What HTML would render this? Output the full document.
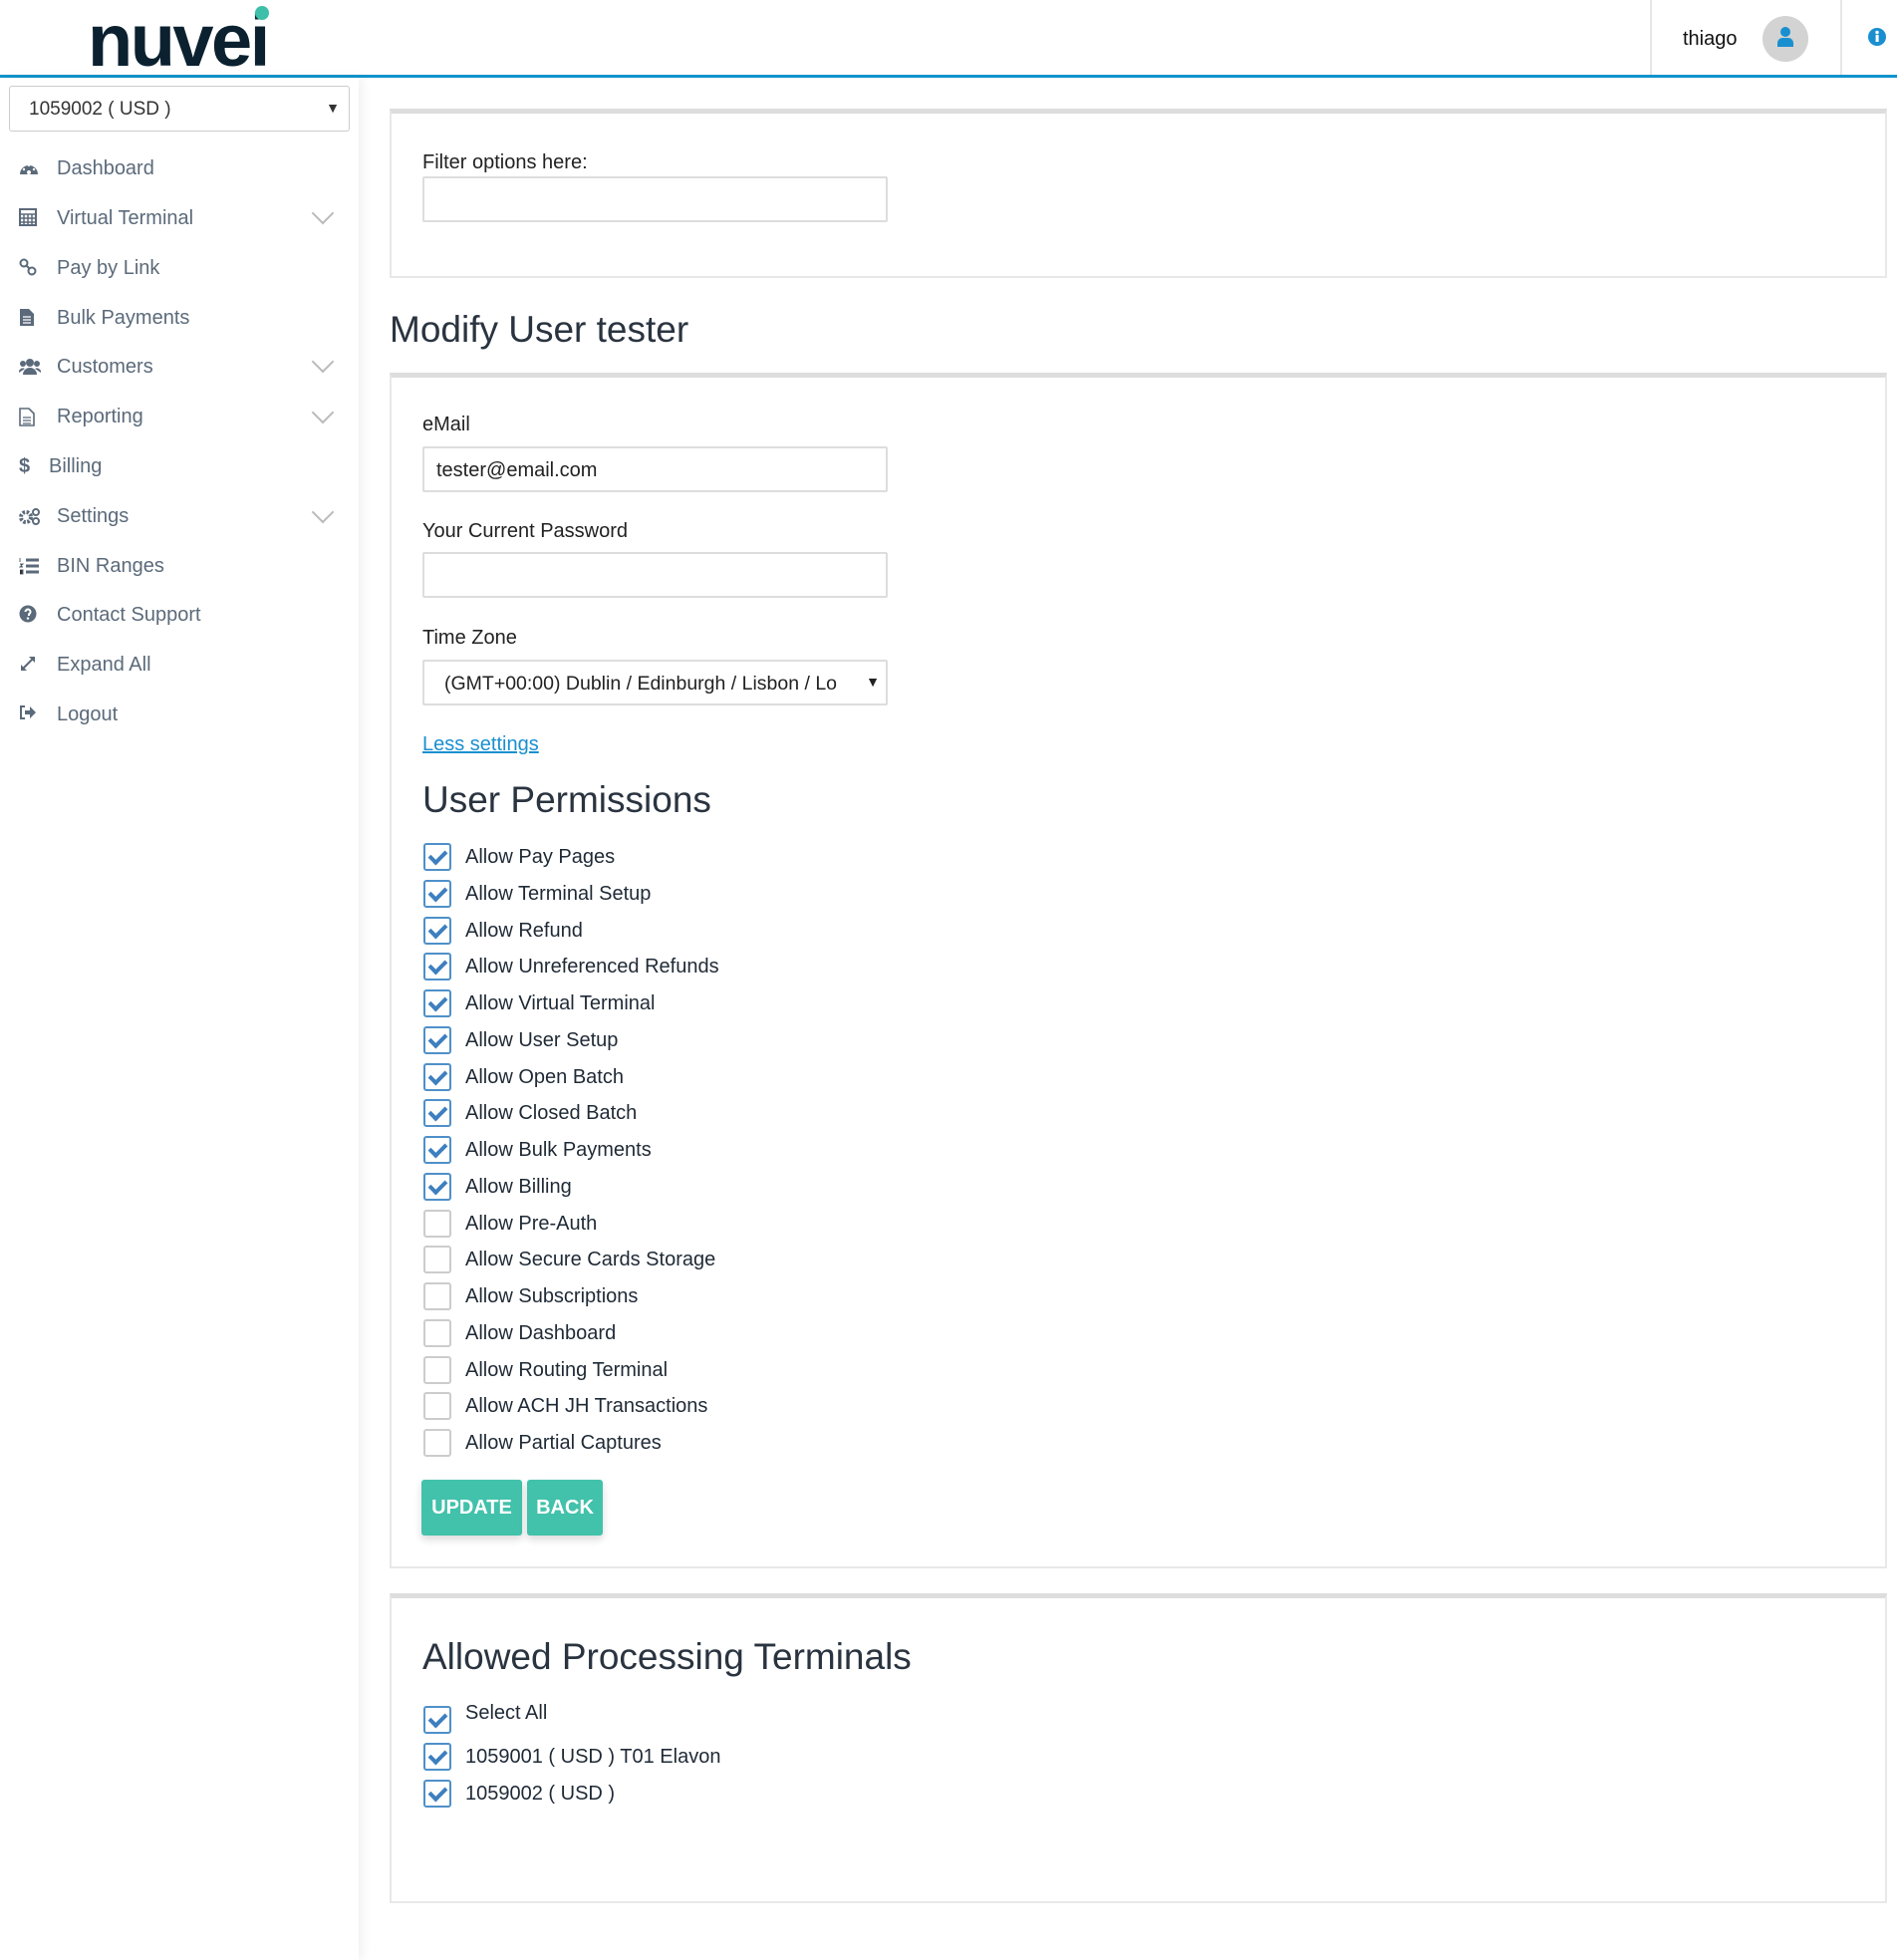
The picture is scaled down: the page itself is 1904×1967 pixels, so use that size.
<!DOCTYPE html>
<html><head><meta charset="utf-8"><style>
*{box-sizing:border-box;margin:0;padding:0}
body{width:1904px;height:1967px;position:relative;background:#fff;font-family:"Liberation Sans",Arial,sans-serif;color:#1f2a36;overflow:hidden}
.abs{position:absolute}
.hdr{left:0;top:0;width:1904px;height:78px;background:#fff;border-bottom:3px solid #0e94cc}
.logo{left:88px;top:4px;font:bold 74px/74px "Liberation Sans",sans-serif;color:#0b2130;letter-spacing:-2.5px}
.dot{left:256px;top:6px;width:14px;height:14px;border-radius:50%;background:#3dbfa9}
.vsep{top:0;width:2px;height:75px;background:#e6e6e6}
.side{left:0;top:78px;width:360px;height:1889px;background:#fff;box-shadow:4px 0 10px rgba(0,0,0,.06)}
.sel{left:9px;top:86px;width:342px;height:46px;border:1px solid #ccc;border-radius:3px;font-size:19px;padding:12px 19px;color:#333}
.nav{left:57px;font-size:20px;color:#5b6a7a;height:30px;line-height:30px}
.ic{position:absolute;left:19px}
.chev{left:316px;width:16px;height:16px;border-right:2px solid #bbb;border-bottom:2px solid #bbb;transform:rotate(45deg)}
.panel{left:391px;width:1503px;border:2px solid #e8e8e8;border-top:5px solid #ddd;background:#fff}
.lbl{left:424px;font-size:20px;color:#222}
.inp{left:424px;width:467px;height:46px;border:2px solid #ddd;border-radius:2px;font-size:20px;padding:11px 12px;color:#222}
h1,h2{position:absolute;font-weight:normal;color:#2a3440;font-family:"Liberation Sans",sans-serif}
.cb{left:425px;width:28px;height:28px;border:2px solid #ccc;border-radius:3px;background:#fff}
.cb.on{border-color:#4f90c9}
.cb.on:after{content:"";position:absolute;left:7px;top:2px;width:7px;height:13px;border-right:4px solid #3d7fbf;border-bottom:4px solid #3d7fbf;transform:rotate(45deg)}
.ct{left:467px;font-size:20px;color:#1f2a36}
.btn{top:1485px;height:56px;background:#42c1ab;color:#fff;font-weight:bold;font-size:20px;line-height:56px;text-align:center;border-radius:3px;box-shadow:0 4px 8px rgba(0,0,0,.15)}
</style></head><body>
<div class="abs hdr"></div>
<div class="abs logo">nuvei</div>
<div class="abs dot"></div>
<div class="abs vsep" style="left:1656px"></div>
<div class="abs vsep" style="left:1847px"></div>
<div class="abs" style="left:1689px;top:28px;font-size:20px;color:#111">thiago</div>
<div class="abs" style="left:1769px;top:16px;width:46px;height:46px;border-radius:50%;background:#d3d3d3"></div>
<svg class="abs" style="left:1781px;top:26px" width="22" height="22" viewBox="0 0 22 22"><circle cx="11" cy="6" r="5" fill="#1a8fd0"/><path d="M3 21v-4a5 5 0 0 1 5-5h6a5 5 0 0 1 5 5v4z" fill="#1a8fd0"/></svg>
<svg class="abs" style="left:1875px;top:28px" width="18" height="18" viewBox="0 0 18 18"><circle cx="9" cy="9" r="9" fill="#1a8fd0"/><rect x="7.6" y="7" width="3" height="7" fill="#fff"/><circle cx="9" cy="4.5" r="1.7" fill="#fff"/></svg>

<div class="abs side"></div>
<div class="abs sel">1059002 ( USD )<span style="position:absolute;right:9px;top:13px;font-size:14px">▼</span></div>

<svg class="ic" style="top:160px" width="20" height="18" viewBox="0 0 20 18"><path d="M1 15a9 9 0 0 1 18 0z" fill="#5b6a7a"/><circle cx="10" cy="13" r="2" fill="#fff"/><circle cx="5" cy="10" r="1.2" fill="#fff"/><circle cx="15" cy="10" r="1.2" fill="#fff"/><circle cx="10" cy="6" r="1.2" fill="#fff"/></svg>
<div class="abs nav" style="top:154px">Dashboard</div>
<svg class="ic" style="top:209px" width="18" height="18" viewBox="0 0 18 18"><rect x="1" y="1" width="16" height="16" fill="none" stroke="#5b6a7a" stroke-width="2"/><path d="M1 6h16M1 10h16M1 14h16M5 6v11M9 6v11M13 6v11" stroke="#5b6a7a" stroke-width="1.5"/></svg>
<div class="abs nav" style="top:204px">Virtual Terminal</div>
<div class="abs chev" style="top:206px"></div>
<svg class="ic" style="top:259px" width="18" height="18" viewBox="0 0 18 18"><circle cx="5" cy="5" r="3.5" fill="none" stroke="#5b6a7a" stroke-width="2"/><circle cx="13" cy="13" r="3.5" fill="none" stroke="#5b6a7a" stroke-width="2"/><path d="M7 7l4 4" stroke="#5b6a7a" stroke-width="2"/></svg>
<div class="abs nav" style="top:254px">Pay by Link</div>
<svg class="ic" style="top:309px" width="16" height="19" viewBox="0 0 16 19"><path d="M1 1h9l5 5v12H1z" fill="#5b6a7a"/><path d="M4 9h8M4 12h8M4 15h8" stroke="#fff" stroke-width="1.3"/></svg>
<div class="abs nav" style="top:304px">Bulk Payments</div>
<svg class="ic" style="top:359px" width="22" height="17" viewBox="0 0 22 17"><circle cx="11" cy="5" r="4" fill="#5b6a7a"/><circle cx="4" cy="6" r="3" fill="#5b6a7a"/><circle cx="18" cy="6" r="3" fill="#5b6a7a"/><path d="M4 17a7 7 0 0 1 14 0zM0 15a4 4 0 0 1 6-4M22 15a4 4 0 0 0-6-4" fill="#5b6a7a"/></svg>
<div class="abs nav" style="top:353px">Customers</div>
<div class="abs chev" style="top:355px"></div>
<svg class="ic" style="top:409px" width="16" height="19" viewBox="0 0 16 19"><path d="M1 1h9l5 5v12H1z" fill="none" stroke="#5b6a7a" stroke-width="1.6"/><path d="M4 10h8M4 13h8M4 16h8" stroke="#5b6a7a" stroke-width="1.3"/></svg>
<div class="abs nav" style="top:403px">Reporting</div>
<div class="abs chev" style="top:406px"></div>
<div class="abs" style="left:19px;top:453px;font-size:20px;font-weight:bold;color:#5b6a7a;line-height:30px">$</div>
<div class="abs nav" style="top:453px;left:49px">Billing</div>
<svg class="ic" style="top:509px" width="22" height="18" viewBox="0 0 22 18"><circle cx="7" cy="10" r="5" fill="none" stroke="#5b6a7a" stroke-width="4" stroke-dasharray="2.5 1.5"/><circle cx="17" cy="5" r="3" fill="none" stroke="#5b6a7a" stroke-width="2"/><circle cx="17" cy="14" r="3" fill="none" stroke="#5b6a7a" stroke-width="2"/></svg>
<div class="abs nav" style="top:503px">Settings</div>
<div class="abs chev" style="top:506px"></div>
<svg class="ic" style="top:559px" width="20" height="18" viewBox="0 0 20 18"><path d="M7 3h13M7 9h13M7 15h13" stroke="#5b6a7a" stroke-width="3"/><path d="M1 1v4M1 7h3l-3 3h3M1 13h3v4H1M1 15h3" stroke="#5b6a7a" stroke-width="1"/></svg>
<div class="abs nav" style="top:553px">BIN Ranges</div>
<svg class="ic" style="top:607px" width="18" height="18" viewBox="0 0 18 18"><circle cx="9" cy="9" r="8.5" fill="#5b6a7a"/><path d="M6.5 7a2.5 2.5 0 1 1 3.5 2.3V11" fill="none" stroke="#fff" stroke-width="2"/><circle cx="9" cy="13.6" r="1.2" fill="#fff"/></svg>
<div class="abs nav" style="top:602px">Contact Support</div>
<svg class="ic" style="top:657px" width="18" height="18" viewBox="0 0 18 18"><path d="M3 15L15 3" stroke="#5b6a7a" stroke-width="2"/><path d="M10 2h6v6zM2 10v6h6z" fill="#5b6a7a"/></svg>
<div class="abs nav" style="top:652px">Expand All</div>
<svg class="ic" style="top:707px" width="18" height="16" viewBox="0 0 18 16"><path d="M6 2H2v12h4" fill="none" stroke="#5b6a7a" stroke-width="2"/><path d="M6 6h5V2l6 6-6 6v-4H6z" fill="#5b6a7a"/></svg>
<div class="abs nav" style="top:702px">Logout</div>

<div class="abs panel" style="top:109px;height:170px"></div>
<div class="abs lbl" style="top:152px">Filter options here:</div>
<div class="abs inp" style="top:177px"></div>

<h1 style="left:391px;top:310px;font-size:37px">Modify User tester</h1>
<div class="abs panel" style="top:374px;height:1200px"></div>
<div class="abs lbl" style="top:415px">eMail</div>
<div class="abs inp" style="top:448px">tester@email.com</div>
<div class="abs lbl" style="top:522px">Your Current Password</div>
<div class="abs inp" style="top:554px"></div>
<div class="abs lbl" style="top:629px">Time Zone</div>
<div class="abs inp" style="top:662px;padding-left:20px;white-space:nowrap;overflow:hidden;font-size:19.5px">(GMT+00:00) Dublin / Edinburgh / Lisbon / Lo<span style="position:absolute;right:6px;top:12px;font-size:14px;background:#fff">▼</span></div>
<div class="abs" style="left:424px;top:736px;font-size:20px;color:#1a8fd0;text-decoration:underline">Less settings</div>
<h2 style="left:424px;top:782px;font-size:37px">User Permissions</h2>

<div class="abs cb on" style="top:846px"></div><div class="abs ct" style="top:849px">Allow Pay Pages</div>
<div class="abs cb on" style="top:883px"></div><div class="abs ct" style="top:886px">Allow Terminal Setup</div>
<div class="abs cb on" style="top:920px"></div><div class="abs ct" style="top:923px">Allow Refund</div>
<div class="abs cb on" style="top:956px"></div><div class="abs ct" style="top:959px">Allow Unreferenced Refunds</div>
<div class="abs cb on" style="top:993px"></div><div class="abs ct" style="top:996px">Allow Virtual Terminal</div>
<div class="abs cb on" style="top:1030px"></div><div class="abs ct" style="top:1033px">Allow User Setup</div>
<div class="abs cb on" style="top:1067px"></div><div class="abs ct" style="top:1070px">Allow Open Batch</div>
<div class="abs cb on" style="top:1103px"></div><div class="abs ct" style="top:1106px">Allow Closed Batch</div>
<div class="abs cb on" style="top:1140px"></div><div class="abs ct" style="top:1143px">Allow Bulk Payments</div>
<div class="abs cb on" style="top:1177px"></div><div class="abs ct" style="top:1180px">Allow Billing</div>
<div class="abs cb" style="top:1214px"></div><div class="abs ct" style="top:1217px">Allow Pre-Auth</div>
<div class="abs cb" style="top:1250px"></div><div class="abs ct" style="top:1253px">Allow Secure Cards Storage</div>
<div class="abs cb" style="top:1287px"></div><div class="abs ct" style="top:1290px">Allow Subscriptions</div>
<div class="abs cb" style="top:1324px"></div><div class="abs ct" style="top:1327px">Allow Dashboard</div>
<div class="abs cb" style="top:1361px"></div><div class="abs ct" style="top:1364px">Allow Routing Terminal</div>
<div class="abs cb" style="top:1397px"></div><div class="abs ct" style="top:1400px">Allow ACH JH Transactions</div>
<div class="abs cb" style="top:1434px"></div><div class="abs ct" style="top:1437px">Allow Partial Captures</div>

<div class="abs btn" style="left:423px;width:101px">UPDATE</div>
<div class="abs btn" style="left:529px;width:76px">BACK</div>

<div class="abs panel" style="top:1599px;height:311px"></div>
<h2 style="left:424px;top:1642px;font-size:37px">Allowed Processing Terminals</h2>
<div class="abs cb on" style="top:1712px"></div><div class="abs ct" style="top:1708px">Select All</div>
<div class="abs cb on" style="top:1749px"></div><div class="abs ct" style="top:1752px">1059001 ( USD ) T01 Elavon</div>
<div class="abs cb on" style="top:1786px"></div><div class="abs ct" style="top:1789px">1059002 ( USD )</div>
</body></html>
